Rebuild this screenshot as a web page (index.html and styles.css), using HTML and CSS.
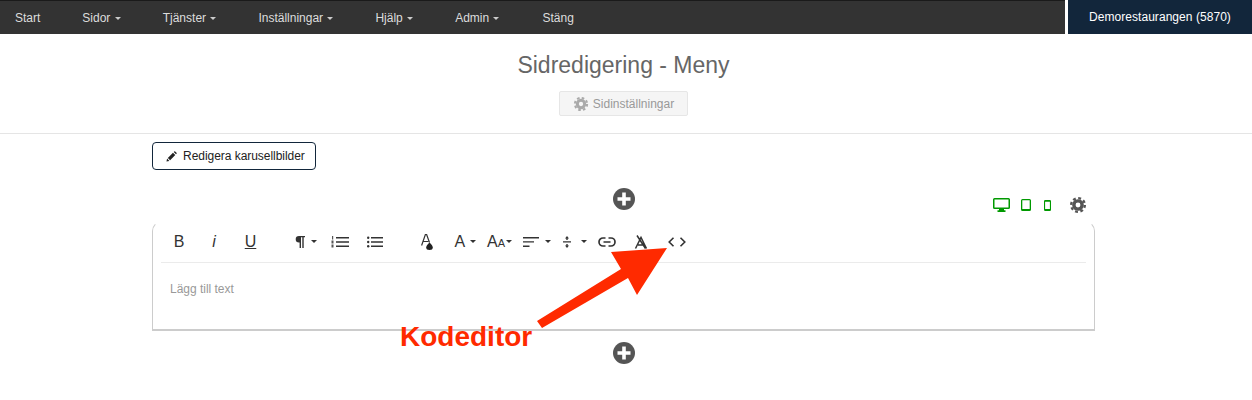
FILE: index.html
```html
<html>
    <head>
        <title>Sidredigering - Meny</title>
        <meta charset="utf-8">
        <link rel="stylesheet" href="styles.css">
    </head>
    <body>
        <svg class="defs" width="0" height="0">
            <symbol id="gear" viewBox="-10 -10 20 20">
                <circle r="4.6" fill="none" stroke="currentColor" stroke-width="3.8"/>
                <circle r="7.6" fill="none" stroke="currentColor" stroke-width="2.6" stroke-dasharray="3.2 2.77"/>
            </symbol>
            <symbol id="plus" viewBox="0 0 22 22">
                <circle cx="11" cy="11" r="11" fill="currentColor"/>
                <path d="M9.2 4.5h3.6v4.7h4.7v3.6h-4.7v4.7H9.2v-4.7H4.5V9.200h4.700z" fill="#fff"/>
            </symbol>
        </svg>
        <div class="topbar">
            <div class="menu">
                <a class="first">Start</a>
                <a class="m-sidor">Sidor <span class="caret"></span></a>
                <a class="m-tj">Tjänster <span class="caret"></span></a>
                <a class="m-inst">Inställningar <span class="caret"></span></a>
                <a class="m-hj">Hjälp <span class="caret"></span></a>
                <a class="m-ad">Admin <span class="caret"></span></a>
                <a class="m-st">Stäng</a>
            </div>
            <div class="account">Demorestaurangen (5870)</div>
        </div>
        <div class="head">
            <h1>Sidredigering - Meny</h1>
            <button class="settings">
                <svg class="gear-sm"><use href="#gear"/></svg>Sidinställningar
            </button>
        </div>
        <div class="content">
            <button class="carousel">
                <svg class="pencil" viewBox="0 0 12 12"><path d="M0.500 11.500l0.700-3.200 2.500 2.500zM2 7.500L7.600 1.900l2.500 2.500L4.500 10zM8.400 1.100l0.600-0.600q0.500-0.400 1 0l1.500 1.500q0.400 0.500 0 1l-0.600 0.600z" fill="currentColor"/></svg>Redigera karusellbilder
            </button>
            <div class="add-row first-add">
                <svg class="plus"><use href="#plus"/></svg>
                <div class="devices">
                    <svg class="d-desk" viewBox="0 0 17 14"><path d="M1.500 0h14q1.500 0 1.500 1.500v8q0 1.500-1.500 1.500h-14Q0 11 0 9.500v-8Q0 0 1.500 0zM1.500 1.600v7.800h14V1.600zM6 11h5v1.300h1.500V14h-8v-1.700H6z" fill="currentColor" fill-rule="evenodd"/></svg>
                    <svg class="d-tab" viewBox="0 0 10 12"><path d="M1.500 0h7Q10 0 10 1.500v9Q10 12 8.500 12h-7Q0 12 0 10.500v-9Q0 0 1.500 0zM1.300 1.300v8.700h7.400V1.300z" fill="currentColor" fill-rule="evenodd"/></svg>
                    <svg class="d-phone" viewBox="0 0 7 11"><path d="M1.200 0h4.600Q7 0 7 1.200v8.600Q7 11 5.800 11H1.200Q0 11 0 9.800V1.200Q0 0 1.200 0zM1.100 1.700v7.300h4.800V1.700z" fill="currentColor" fill-rule="evenodd"/></svg>
                    <svg class="gear-lg"><use href="#gear"/></svg>
                </div>
            </div>
            <div class="editor">
                <div class="toolbar">
                    <span class="tb w-b ch-b">B</span>
                    <span class="tb w-i ch-i">i</span>
                    <span class="tb w-u ch-u">U</span>
                    <span class="tb w-p">
                        <svg class="pilcrow" width="10" height="12" viewBox="0 0 10 12"><path d="M4 0h6v1.300H8.700V12H7.300V1.300H6V12H4.600V6.600H4a3.300 3.300 0 0 1 0-6.600z" fill="#333"/></svg>
                        <span class="caret dark"></span>
                    </span>
                    <span class="tb w-ol">
                        <svg width="18" height="12" viewBox="0 0 18 12"><path d="M5 1h13v1.500H5zM5 5.200h13v1.500H5zM5 9.500h13V11H5z" fill="#333"/><path d="M1 0h1.200v3.400H1zM0.500 4.500h2v3h-2zM0.500 8.500h2v3h-2z" fill="#555"/></svg>
                    </span>
                    <span class="tb w-ul">
                        <svg width="16" height="12" viewBox="0 0 16 12"><path d="M4 1h12v1.500H4zM4 5.200h12v1.500H4zM4 9.500h12V11H4z" fill="#333"/><circle cx="1.200" cy="1.700" r="1.200" fill="#333"/><circle cx="1.200" cy="6" r="1.200" fill="#333"/><circle cx="1.200" cy="10.200" r="1.200" fill="#333"/></svg>
                    </span>
                    <span class="tb w-col">
                        <svg class="col-ico" width="12" height="16" viewBox="0 0 12 16"><path d="M0.600 11.500L4.400 0.500h1.200L8.500 8.500M2 7.500h5.300" fill="none" stroke="#333" stroke-width="1.200"/><path d="M8.500 8.500q3.300 3.200 3.300 5a3.300 2.500 0 0 1-6.600 0q0-1.800 3.300-5z" fill="#222"/></svg>
                    </span>
                    <span class="tb w-a ch-a">A <span class="caret dark"></span></span>
                    <span class="tb w-aa ch-a">A<small>A</small><span class="caret dark"></span></span>
                    <span class="tb w-al">
                        <svg width="16" height="10" viewBox="0 0 16 10"><path d="M0 0h16v1.400H0zM0 4.200h11v1.400H0zM0 8.500h6.500v1.400H0z" fill="#333"/></svg>
                        <span class="caret dark"></span>
                    </span>
                    <span class="tb w-lh">
                        <svg width="8" height="12" viewBox="0 0 8 12"><path d="M0 5.300h8v1.300H0zM4 0l2 2.600H4.700v1.400H3.300V2.600H2zM4 12l2-2.600H4.700V8H3.300v1.400H2z" fill="#333"/></svg>
                        <span class="caret dark"></span>
                    </span>
                    <span class="tb w-link">
                        <svg width="18" height="10" viewBox="0 0 18 10"><path d="M7.500 1H5a4 4 0 0 0 0 8h2.500M10.500 1H13a4 4 0 0 1 0 8h-2.500M5.500 5h7" fill="none" stroke="#333" stroke-width="1.700"/></svg>
                    </span>
                    <span class="tb w-clear">
                        <svg width="15" height="14" viewBox="0 0 15 14"><path d="M1.500 13.500L7 2.500l5.500 11M4 10h6.500M3 0.500l8.500 13" fill="none" stroke="#333" stroke-width="1.500"/></svg>
                    </span>
                    <span class="tb w-code">
                        <svg width="18" height="10" viewBox="0 0 18 10"><path d="M5.500 0.700L1.200 5l4.300 4.300M12.500 0.700L16.800 5l-4.300 4.300" fill="none" stroke="#333" stroke-width="1.600"/></svg>
                    </span>
                </div>
                <p class="placeholder">Lägg till text</p>
            </div>
            <div class="add-row">
                <svg class="plus"><use href="#plus"/></svg>
            </div>
        </div>
        <svg class="arrow" viewBox="0 0 140 90" width="140" height="90"><path d="M131 6L75 10 85 27 1 79 6 86 92 36 101 53z" fill="#ff2a00"/></svg>
        <div class="note">Kodeditor</div>
    </body>
</html>
```

FILE: styles.css
```css
*{
    box-sizing: border-box;
}
body{
    margin: 0;
    background: #fff;
    font-family: "Liberation Sans", Arial, sans-serif;
    font-size: 12px;
    color: #333;
    position: relative;
    height: 400px;
    overflow: hidden;
}
.defs{
    position: absolute;
}
.topbar{
    display: flex;
    height: 34px;
}
.menu{
    flex: 1;
    display: flex;
    align-items: center;
    background: #333;
    border-top: 1px solid #1a1a1a;
    color: #ddd;
}
.menu a{
    display: block;
    white-space: nowrap;
}
.first{ margin-left: 15px; }
.m-sidor{ margin-left: 42px; }
.m-tj{ margin-left: 42px; }
.m-inst{ margin-left: 42px; }
.m-hj{ margin-left: 42px; }
.m-ad{ margin-left: 42px; }
.m-st{ margin-left: 43px; }
.caret{
    display: inline-block;
    width: 0;
    height: 0;
    margin-left: 1px;
    vertical-align: middle;
    border-top: 3px solid #ccc;
    border-left: 3px solid transparent;
    border-right: 3px solid transparent;
}
.caret.dark{
    border-top-color: #333;
}
.account{
    width: 184px;
    margin-left: 3px;
    background: #12263b;
    color: #fff;
    line-height: 34px;
    padding-left: 21px;
    letter-spacing: 0.05px;
}
.head{
    height: 100px;
    border-bottom: 1px solid #e5e5e5;
    text-align: center;
    padding: 17px 5px 0 0;
}
.head h1{
    margin: 0;
    font-size: 23px;
    font-weight: normal;
    line-height: 28px;
    color: #666;
}
.settings{
    display: inline-flex;
    align-items: center;
    justify-content: center;
    width: 129px;
    height: 25px;
    margin-top: 12px;
    background: #f5f5f5;
    border: 1px solid #e6e6e6;
    border-radius: 2px;
    color: #999;
    font: 12px "Liberation Sans", Arial, sans-serif;
}
.gear-sm{
    width: 16px;
    height: 16px;
    margin-right: 4px;
    color: #aaa;
}
.content{
    width: 943px;
    margin-left: 152px;
    padding-top: 8px;
}
.carousel{
    display: flex;
    align-items: center;
    width: 164px;
    height: 28px;
    padding: 0 0 0 13px;
    background: #fff;
    border: 1px solid #12263b;
    border-radius: 4px;
    color: #222;
    letter-spacing: -0.04px;
    font: 12px "Liberation Sans", Arial, sans-serif;
}
.pencil{
    width: 11px;
    height: 11px;
    margin-right: 6px;
}
.add-row{
    display: flex;
    justify-content: center;
    position: relative;
    height: 22px;
    margin-top: 11px;
}
.first-add{
    margin-top: 18px;
    margin-bottom: 11px;
}
.plus{
    width: 22px;
    height: 22px;
    color: #555;
}
.devices{
    position: absolute;
    right: 8px;
    top: 0;
    height: 28px;
    display: flex;
    align-items: center;
    color: #090;
    padding-top: 6px;
}
.d-desk{ width: 17px; height: 14px; }
.d-tab{ width: 10px; height: 12px; margin-left: 11px; }
.d-phone{ width: 7px; height: 11px; margin-left: 13px; }
.gear-lg{
    width: 18px;
    height: 18px;
    margin-left: 18px;
    color: #555;
}
.editor{
    height: 110px;
    border: 1px solid #ccc;
    border-top-color: transparent;
    border-bottom-width: 2px;
    border-radius: 10px 10px 0 0;
    position: relative;
    padding: 0 8px;
}
.toolbar{
    display: flex;
    align-items: center;
    height: 41px;
    padding-bottom: 1px;
    border-bottom: 1px solid #ebebeb;
    color: #333;
}
.tb{
    display: flex;
    align-items: center;
    justify-content: center;
    flex: none;
    white-space: pre;
    height: 100%;
}
.ch-b{ font-size: 16px; }
.ch-i{ font-size: 16px; font-style: italic; }
.ch-u{ font-size: 16px; text-decoration: underline; }
.ch-a{ font-size: 16px; }
.ch-a small{ font-size: 11px; margin-top: 3px; }
.pilcrow{ margin-right: 5px; }
.w-b{ width: 36px; }
.w-i{ width: 34px; }
.w-u{ width: 39px; }
.w-p{ width: 33px; margin-left: 19px; }
.w-ol{ width: 35px; }
.w-ul{ width: 36px; }
.w-col{ width: 36px; margin-left: 16px; }
.w-a{ width: 36px; margin-left: 2px; }
.w-aa{ width: 33px; }
.w-al{ width: 36px; margin-left: 3px; }
.w-lh{ width: 35px; margin-left: 2px; }
.w-link{ width: 30px; }
.w-clear{ width: 38px; }
.w-code{ width: 34px; }
.w-al svg{ margin-right: 5px; }
.w-lh svg{ margin-right: 9px; }
.placeholder{
    margin: 19px 0 0 9px;
    color: #999;
    font-size: 12px;
    letter-spacing: -0.02px;
}
.arrow{
    position: absolute;
    left: 536px;
    top: 242px;
}
.note{
    position: absolute;
    left: 400px;
    top: 321px;
    font-size: 28px;
    font-weight: bold;
    line-height: 32px;
    color: #ff2a00;
}
```
